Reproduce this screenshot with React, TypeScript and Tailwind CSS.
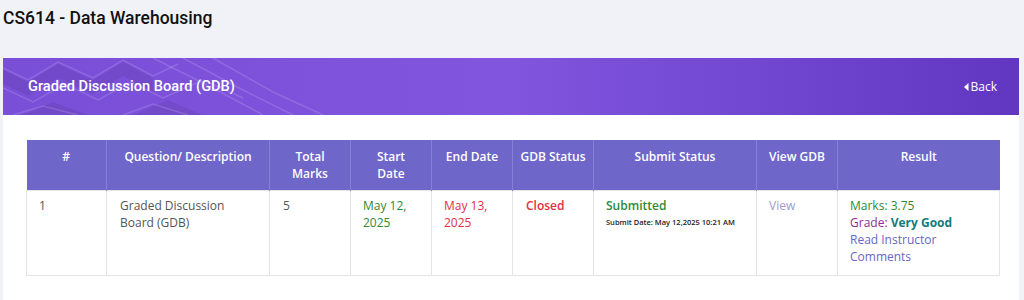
import React from "react";

const cols = [80, 163, 81, 81, 81, 81, 163, 81, 162];

function BannerPattern() {
  return (
    <svg
      className="absolute left-0 top-0 h-full w-[360px]"
      viewBox="0 0 360 57"
      preserveAspectRatio="none"
      fill="none"
    >
      <g fill="#000000" fillOpacity="0.07">
        <path d="M0 12 L25 24 L55 6 L90 22 L120 4 L150 20 L150 34 L120 18 L90 36 L55 20 L25 38 L0 26 Z" />
        <path d="M20 57 L50 44 L85 57 Z" />
        <path d="M130 57 L165 42 L200 57 Z" />
      </g>
      <g stroke="#ffffff" strokeOpacity="0.14" strokeWidth="1.5">
        <path d="M0 10 L25 22 L55 4 L90 20 L120 2 L150 18 L175 6" />
        <path d="M0 30 L30 44 L62 26 L95 42 L128 24 L160 40 L200 22 L240 40" />
        <path d="M10 57 L40 48 L75 57 M120 57 L150 46 L185 57" />
        <path d="M150 0 L210 30 L260 57" />
        <path d="M180 0 L240 32 L290 57" />
        <path d="M210 0 L270 34 L320 57" />
      </g>
    </svg>
  );
}

export default function App() {
  const font = "font-['Open_Sans',sans-serif]";
  return (
    <div className="min-h-[300px] w-full bg-[#f1f2f7]">
      <div className="h-[58px] pl-[3px] pt-[6px]">
        <h1 className="font-['Roboto',sans-serif] text-[17.5px] font-medium leading-[24px] text-[#111]">
          CS614 - Data Warehousing
        </h1>
      </div>
      <div className="ml-[3px] mr-[5px] bg-white pb-[24px]">
        <div className="relative flex h-[57px] items-center justify-between overflow-hidden bg-gradient-to-r from-[#7a4fd8] via-[#8155de] to-[#6137c2] pl-[25px] pr-[22px]">
          <BannerPattern />
          <div className="relative font-['Roboto',sans-serif] text-[14.6px] font-medium text-white">
            Graded Discussion Board (GDB)
          </div>
          <div className={`relative flex items-center gap-[2px] ${font} text-[12px] text-white`}>
            <svg width="5" height="8" viewBox="0 0 5 8">
              <path d="M4.5 0 L0 4 L4.5 8 Z" fill="#ffffff" />
            </svg>
            <span>Back</span>
          </div>
        </div>
        <div className="pl-[23px] pr-[20px] pt-[25px]">
          <table className={`w-[973px] table-fixed border-collapse ${font} text-[12px]`}>
            <colgroup>
              {cols.map((w, i) => (
                <col key={i} style={{ width: w }} />
              ))}
            </colgroup>
            <thead>
              <tr className="h-[50px] bg-[#6e66c9] text-white">
                {[
                  "#",
                  "Question/ Description",
                  <>Total<br />Marks</>,
                  <>Start<br />Date</>,
                  "End Date",
                  "GDB Status",
                  "Submit Status",
                  "View GDB",
                  "Result",
                ].map((h, i) => (
                  <th
                    key={i}
                    className="border-x border-[#8580d4] px-[4px] pb-[8px] pt-[8px] align-top text-center text-[12px] font-semibold leading-[17px] first:border-l-0 last:border-r-0"
                  >
                    {h}
                  </th>
                ))}
              </tr>
            </thead>
            <tbody>
              <tr className="h-[85px] align-top leading-[17px]">
                <td className="border border-[#e4e4e8] px-[12px] pt-[6px] text-[#555555]">1</td>
                <td className="border border-[#e4e4e8] px-[13px] pt-[6px] text-[#555555]">
                  Graded Discussion
                  <br />
                  Board (GDB)
                </td>
                <td className="border border-[#e4e4e8] px-[13px] pt-[6px] text-[#555555]">5</td>
                <td className="border border-[#e4e4e8] px-[12px] pt-[6px] font-medium text-[#2f8a33]">
                  May 12,
                  <br />
                  2025
                </td>
                <td className="border border-[#e4e4e8] px-[12px] pt-[6px] font-medium text-[#e2303e]">
                  May 13,
                  <br />
                  2025
                </td>
                <td className="border border-[#e4e4e8] px-[13px] pt-[6px] font-semibold text-[#e2303e]">
                  Closed
                </td>
                <td className="border border-[#e4e4e8] px-[12px] pt-[6px]">
                  <div className="font-semibold text-[#2f8a33]">Submitted</div>
                  <div className="text-[7.5px] font-semibold text-[#222]">
                    Submit Date: May 12,2025 10:21 AM
                  </div>
                </td>
                <td className="border border-[#e4e4e8] px-[12px] pt-[6px] text-[#9c9ad2]">View</td>
                <td className="border border-[#e4e4e8] px-[12px] pt-[6px] font-medium">
                  <div className="text-[#2f8a33]">Marks: 3.75</div>
                  <div className="text-[#922b96]">
                    Grade: <span className="font-bold text-[#137c78]">Very Good</span>
                  </div>
                  <div className="text-[#6a66c4]">
                    Read Instructor
                    <br />
                    Comments
                  </div>
                </td>
              </tr>
            </tbody>
          </table>
        </div>
      </div>
    </div>
  );
}
